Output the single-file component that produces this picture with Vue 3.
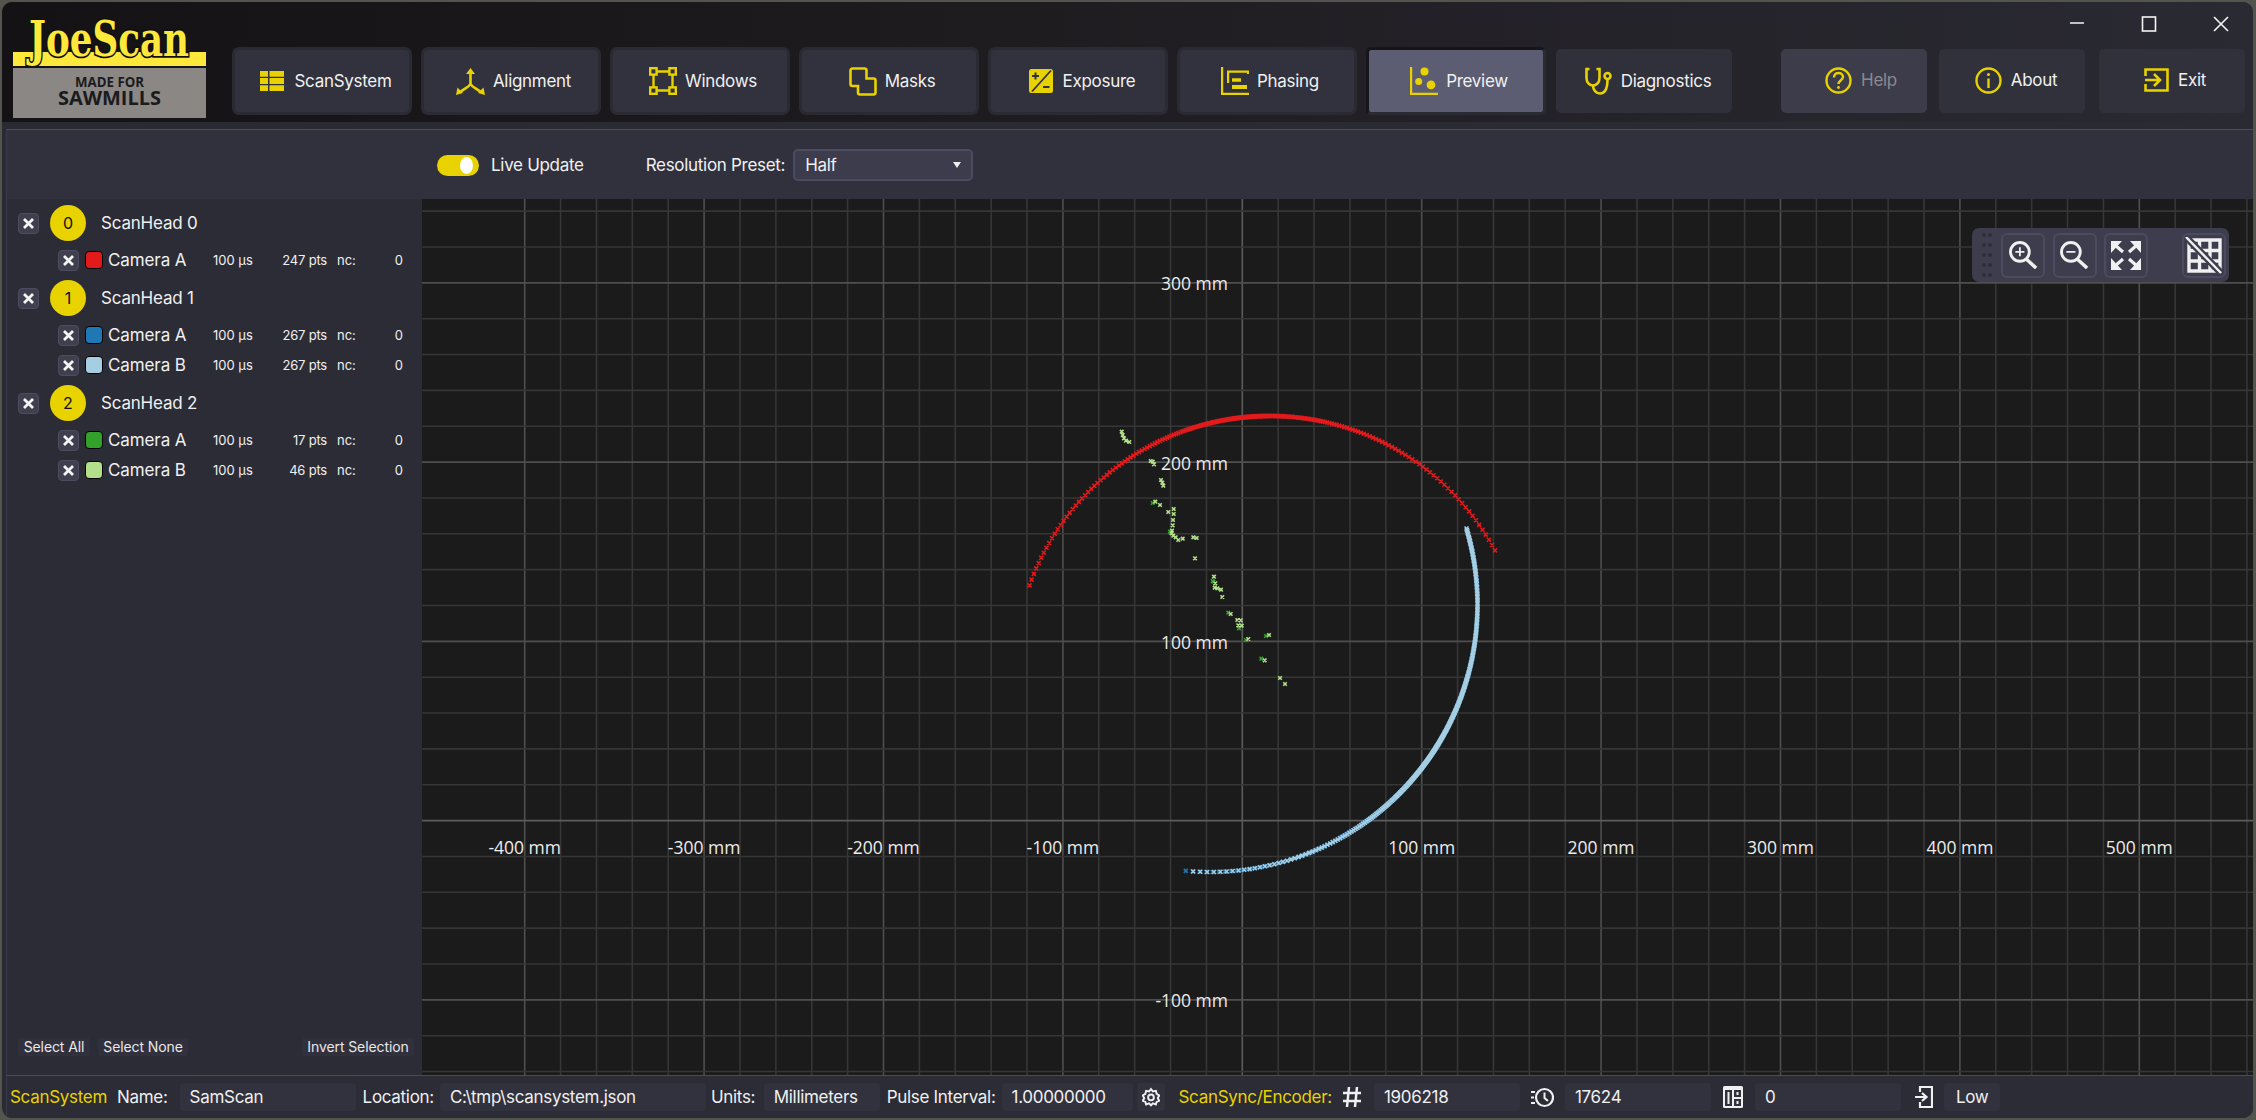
<script setup>
const W = 1831, H = 876, X0 = 422, Y0 = 199
const vLines = []
for (let k = -20; k <= 60; k++) {
  const x = 1242.3 + k * 35.88
  if (x > X0 && x < X0 + W) vLines.push({ x, cls: k === 0 ? 'axis' : k % 5 === 0 ? 'major' : 'minor' })
}
const hLines = []
for (let k = -30; k <= 30; k++) {
  const y = 820.6 + k * 35.85
  if (y > Y0 && y < Y0 + H) hLines.push({ y, cls: k === 0 ? 'axis' : k % 5 === 0 ? 'major' : 'minor' })
}
const xLabels = [-400, -300, -200, -100, 100, 200, 300, 400, 500].map(v => ({ t: v + ' mm', x: 1242.3 + v * 1.794 }))
const yLabels = [300, 200, 100, -100].map(v => ({ t: v + ' mm', y: 820.6 - v * 1.7925 + 7.5 }))

function mark(x, y, s = 2) {
  return `M${(x - s).toFixed(1)} ${(y - s).toFixed(1)}L${(x + s).toFixed(1)} ${(y + s).toFixed(1)}M${(x - s).toFixed(1)} ${(y + s).toFixed(1)}L${(x + s).toFixed(1)} ${(y - s).toFixed(1)}`
}
function arc(cx, cy, r, a0, a1, n, warp) {
  let d = ''
  for (let i = 0; i < n; i++) {
    const t = warp(i / (n - 1))
    const a = a0 + (a1 - a0) * t
    d += mark(cx + r * Math.cos(a), cy + r * Math.sin(a))
  }
  return d
}
const rad = Math.PI / 180
const bothEnds = u => {
  const s = 2 * u - 1
  return (s * 0.2 + 0.8 * s * s * s + 1) / 2
}
const lastEnd = u => 0.75 * u + 0.25 * Math.pow(u, 12)
const redPath = arc(1270, 671.5, 255.5, -160.3 * rad, -28.3 * rad, 247, bothEnds)
const bluePathB = arc(1210, 604.5, 267.5, -16.5 * rad, 93.6 * rad, 267, lastEnd)
const bluePathA = arc(1210, 604.5, 267.5, -14 * rad, 95.2 * rad, 267, lastEnd)

const lg = [[365,95],[368,105],[372,115],[378,122],[388,126],[452,183],[458,185],[462,193],[483,240],[487,248],[490,257],[466,305],[480,315],[505,336],[521,327],[521,342],[519,360],[518,376],[516,392],[515,400],[520,407],[527,412],[535,420],[548,416],[580,412],[590,414],[585,475],[642,530],[646,550],[644,563],[652,565],[663,569],[667,591],[692,642],[712,660],[722,661],[715,676],[725,677],[745,717],[807,705],[794,781],[840,834],[855,852]]
const dg = [[458,309],[510,395],[640,545],[685,638],[717,685],[738,720],[798,708],[784,776],[512,398],[638,543]]
const toPage = p => mark(1000 + p[0] / 3, 400 + p[1] / 3, 1.8)
const lightGreen = lg.map(toPage).join('')
const darkGreen = dg.map(toPage).join('')

const tools = [
  { name: 'ScanSystem', icon: 'table' },
  { name: 'Alignment', icon: 'align' },
  { name: 'Windows', icon: 'windows' },
  { name: 'Masks', icon: 'masks' },
  { name: 'Exposure', icon: 'exposure' },
  { name: 'Phasing', icon: 'phasing' },
  { name: 'Preview', icon: 'preview', active: true },
  { name: 'Diagnostics', icon: 'diag' }
]
const heads = [
  { n: 0, cams: [{ name: 'Camera A', color: '#e31a1c', pts: 247 }] },
  { n: 1, cams: [{ name: 'Camera A', color: '#1f78b4', pts: 267 }, { name: 'Camera B', color: '#a6cee3', pts: 267 }] },
  { n: 2, cams: [{ name: 'Camera A', color: '#33a02c', pts: 17 }, { name: 'Camera B', color: '#b2df8a', pts: 46 }] }
]
</script>

<template>
  <div class="desk">
    <div class="window">
      <header class="header">
        <svg class="logo" viewBox="0 0 193 98" width="193" height="98">
          <rect x="0" y="31" width="193" height="14" fill="#fde83b" />
          <rect x="0" y="47" width="193" height="50" fill="#8a8785" />
          <text x="16" y="35" textLength="160" lengthAdjust="spacingAndGlyphs" class="logo-main">JoeScan</text>
          <text x="96.500" y="66" textLength="69" lengthAdjust="spacingAndGlyphs" text-anchor="middle" class="logo-sub1">MADE FOR</text>
          <text x="96.500" y="84" textLength="103" lengthAdjust="spacingAndGlyphs" text-anchor="middle" class="logo-sub2">SAWMILLS</text>
        </svg>
        <div class="head-right">
          <div class="winctl">
            <svg width="16" height="16" viewBox="0 0 16 16"><path d="M1 7H15" /></svg>
            <svg width="16" height="16" viewBox="0 0 16 16"><rect x="1.500" y="1" width="13" height="14" /></svg>
            <svg width="16" height="16" viewBox="0 0 16 16"><path d="M1 1L15 15M15 1L1 15" /></svg>
          </div>
          <div class="toolrow">
            <div class="tools">
              <button v-for="t in tools" :key="t.name" class="tool" :class="{ active: t.active, wide: t.icon === 'diag' }">
                <span class="ico">
                  <svg v-if="t.icon === 'table'" width="24" height="20" viewBox="0 0 24 20" fill="#e8d200"><path d="M0 0h8v5.800H0zM9.500 0H24v5.800H9.500zM0 7.100h8v5.800H0zM9.500 7.100H24v5.800H9.500zM0 14.200h8V20H0zM9.500 14.200H24V20H9.500z" /></svg>
                  <svg v-else-if="t.icon === 'align'" width="29" height="27" viewBox="0 0 29 27" fill="none" stroke="#e8d200" stroke-width="2.600"><path d="M14.500 4V16M14.500 16C13 19 9 20 4 24M14.500 16C16 19 20 20 25 24" /><path d="M14.500 0L19 6H10Z M0 27L1.500 19.500L7 25Z M29 27L27.500 19.500L22 25Z" fill="#e8d200" stroke="none" /></svg>
                  <svg v-else-if="t.icon === 'windows'" width="28" height="28" viewBox="0 0 28 28" fill="none" stroke="#e8d200" stroke-width="2.400"><path d="M8 4.500H20M8 23.500H20M4.500 8V20M23.500 8V20" /><rect x="1.200" y="1.200" width="6.400" height="6.400" /><rect x="20.400" y="1.200" width="6.400" height="6.400" /><rect x="1.200" y="20.400" width="6.400" height="6.400" /><rect x="20.400" y="20.400" width="6.400" height="6.400" /></svg>
                  <svg v-else-if="t.icon === 'masks'" width="28" height="29" viewBox="0 0 28 29" fill="none" stroke="#e8d200" stroke-width="2.600"><path d="M3.500 1.500H15.500a2 2 0 0 1 2 2V11.500H24.500a2 2 0 0 1 2 2V25.500a2 2 0 0 1-2 2H11a2 2 0 0 1-2-2V19H3.500a2 2 0 0 1-2-2V3.500a2 2 0 0 1 2-2Z" /></svg>
                  <svg v-else-if="t.icon === 'exposure'" width="24" height="24" viewBox="0 0 24 24"><rect width="24" height="24" rx="2.500" fill="#e8d200" /><path d="M3 22.500L22 1.500" stroke="#32323e" stroke-width="1.800" /><path d="M6.500 3.500V10.500M3 7H10M14 18H20.500" stroke="#32323e" stroke-width="2" /></svg>
                  <svg v-else-if="t.icon === 'phasing'" width="28" height="28" viewBox="0 0 28 28" fill="#e8d200"><path d="M0 0H2.200V25.800H28V28H0Z" /><path d="M6 3.500H28V7H26V5.700H8.200V16H6Z" /><path d="M11 11.300H20V14.700H11ZM11 18H26V22H11Z" /></svg>
                  <svg v-else-if="t.icon === 'preview'" width="28" height="28" viewBox="0 0 28 28" fill="#e8d200"><path d="M0 0H2.200V25.800H28V28H0Z" /><circle cx="14.500" cy="4.500" r="4" /><circle cx="8.700" cy="14.500" r="3.500" /><circle cx="21" cy="17.800" r="4.400" /></svg>
                  <svg v-else-if="t.icon === 'diag'" width="28" height="28" viewBox="0 0 28 28" fill="none" stroke="#e8d200" stroke-width="2.600"><path d="M4.500 2H1.500V11C1.500 16 5 18.500 8 18.500C11 18.500 14.500 16 14.500 11V2H11.500" /><path d="M8 18.500C8 23 11 26.500 15 26.500C20 26.500 22.500 22 22.500 12" /><circle cx="22.500" cy="9" r="3" /></svg>
                </span>
                <span class="tool-label">{{ t.name }}</span>
              </button>
            </div>
            <div class="sys">
              <button class="sysbtn help">
                <svg width="27" height="27" viewBox="0 0 27 27" fill="none" stroke="#e8d200" stroke-width="2.400"><circle cx="13.500" cy="13.500" r="12" /><path d="M9 10.500C9 7.500 11 6 13.500 6C16 6 18 7.500 18 10C18 13 13.500 13.500 13.500 17" /><circle cx="13.500" cy="20.500" r="1.400" fill="#e8d200" stroke="none" /></svg>
                <span>Help</span>
              </button>
              <button class="sysbtn about">
                <svg width="27" height="27" viewBox="0 0 27 27" fill="none" stroke="#e8d200" stroke-width="2.400"><circle cx="13.500" cy="13.500" r="12" /><path d="M13.500 11.500V21" /><circle cx="13.500" cy="7.500" r="1.500" fill="#e8d200" stroke="none" /></svg>
                <span>About</span>
              </button>
              <button class="sysbtn exit-btn">
                <svg width="25" height="24" viewBox="0 0 25 24" fill="none" stroke="#e8d200" stroke-width="2.600"><path d="M1.500 8V1.500H23.500V22.500H1.500V16" /><path d="M1 12H15M10 6L16 12L10 18" /></svg>
                <span>Exit</span>
              </button>
            </div>
          </div>
        </div>
      </header>

      <div class="panel">
        <div class="topbar">
          <div class="toggle"><span class="knob"></span></div>
          <span class="lbl live">Live Update</span>
          <span class="lbl res">Resolution Preset:</span>
          <div class="select"><span>Half</span><i class="caret"></i></div>
        </div>
        <div class="main">
          <aside class="side">
            <div class="list">
              <div v-for="h in heads" :key="h.n" class="group">
                <div class="head-row">
                  <span class="check"><svg width="13" height="13" viewBox="0 0 13 13"><path d="M2 2L11 11M11 2L2 11" /></svg></span>
                  <span class="badge">{{ h.n }}</span>
                  <span class="head-name">ScanHead {{ h.n }}</span>
                </div>
                <div v-for="c in h.cams" :key="c.name" class="cam-row">
                  <span class="check"><svg width="13" height="13" viewBox="0 0 13 13"><path d="M2 2L11 11M11 2L2 11" /></svg></span>
                  <span class="swatch" :style="{ background: c.color }"></span>
                  <span class="cam-name">{{ c.name }}</span>
                  <span class="us">100 µs</span>
                  <span class="pts">{{ c.pts }} pts</span>
                  <span class="nc">nc:</span>
                  <span class="zero">0</span>
                </div>
              </div>
            </div>
            <div class="sel">
              <button class="selbtn">Select All</button>
              <button class="selbtn none">Select None</button>
              <button class="selbtn inv">Invert Selection</button>
            </div>
          </aside>
          <section class="chart">
            <svg class="plot" :viewBox="`${X0} ${Y0} ${W} ${H}`">
              <line v-for="l in vLines" :key="'v' + l.x" :x1="l.x" :x2="l.x" :y1="Y0" :y2="Y0 + H" :class="l.cls" />
              <line v-for="l in hLines" :key="'h' + l.y" :x1="X0" :x2="X0 + W" :y1="l.y" :y2="l.y" :class="l.cls" />
              <text v-for="l in xLabels" :key="l.t" :x="l.x" y="854" text-anchor="middle" class="axl">{{ l.t }}</text>
              <text v-for="l in yLabels" :key="l.t" x="1228" :y="l.y" text-anchor="end" class="axl">{{ l.t }}</text>
              <path :d="redPath" stroke="#e31a1c" stroke-width="1.600" fill="none" />
              <path :d="bluePathA" stroke="#1f78b4" stroke-width="1.600" fill="none" />
              <path :d="bluePathB" stroke="#a6cee3" stroke-width="1.600" fill="none" />
              <path :d="darkGreen" stroke="#33a02c" stroke-width="1.600" fill="none" />
              <path :d="lightGreen" stroke="#b2df8a" stroke-width="1.600" fill="none" />
            </svg>
            <div class="plot-tools">
              <div class="grip"><i v-for="n in 10" :key="n"></i></div>
              <button class="pt">
                <svg width="29" height="28" viewBox="0 0 32 31" fill="none" stroke="#f0f0f0" stroke-width="3.200"><circle cx="12" cy="12" r="10.400" /><path d="M19 20L30 30" stroke-width="3.800" /><path d="M12 7V17M7 12H17" stroke-width="2" /></svg>
              </button>
              <button class="pt">
                <svg width="29" height="28" viewBox="0 0 32 31" fill="none" stroke="#f0f0f0" stroke-width="3.200"><circle cx="12" cy="12" r="10.400" /><path d="M19 20L30 30" stroke-width="3.800" /><path d="M7 12H17" stroke-width="2" /></svg>
              </button>
              <button class="pt">
                <svg width="30" height="29" viewBox="0 0 30 29"><g fill="#f0f0f0"><path d="M0 0H11L0 12ZM30 0H19L30 12ZM0 29H11L0 17ZM30 29H19L30 17Z" /></g><path d="M4 4L12 11M26 4L18 11M4 25L12 18M26 25L18 18" stroke="#f0f0f0" stroke-width="3.200" fill="none" /></svg>
              </button>
              <span class="pt-gap"></span>
              <button class="pt">
                <svg width="38" height="37" viewBox="0 0 38 37" fill="none"><path d="M4 3H35V34H4Z M4 13.500H35 M4 24H35 M14.500 3V34 M25 3V34" stroke="#f0f0f0" stroke-width="3.400" /><path d="M1 0L36 36" stroke="#3d3d4d" stroke-width="7" /><path d="M1 0L36 36" stroke="#f0f0f0" stroke-width="2.400" /></svg>
              </button>
            </div>
          </section>
        </div>
        <footer class="status">
          <span class="yl s1">ScanSystem</span>
          <span class="s2">Name:</span>
          <span class="field f-name">SamScan</span>
          <span class="s3">Location:</span>
          <span class="field f-loc">C:\tmp\scansystem.json</span>
          <span class="s3b">Units:</span>
          <span class="field f-units">Millimeters</span>
          <span class="s4">Pulse Interval:</span>
          <span class="field f-pulse">1.00000000</span>
          <button class="gear">
            <svg width="18" height="22" viewBox="0 0 24 24" fill="none" stroke="#f0f0f0" stroke-width="2.600"><path d="M12 1.500L14.500 4.500L18.500 3.800L19.500 7.800L23 10L21 13.500L23 17L19.500 18.500L18.500 22L14.500 20.500L12 23L9.500 20.500L5.500 22L4.500 18.500L1 17L3 13.500L1 10L4.500 7.800L5.500 3.800L9.500 4.500Z" /><circle cx="12" cy="12.500" r="3.800" /></svg>
          </button>
          <span class="yl s5">ScanSync/Encoder:</span>
          <svg class="st-ico hash" width="20" height="22" viewBox="0 0 20 22" fill="none" stroke="#f0f0f0" stroke-width="2.500"><path d="M7 1L5 21M15 1L13 21M1 7H19M1 15H19" /></svg>
          <span class="field f-num">1906218</span>
          <svg class="st-ico clock" width="23" height="23" viewBox="0 0 23 23" fill="none" stroke="#f0f0f0" stroke-width="2.200"><circle cx="13.500" cy="11.500" r="8.500" /><path d="M13.500 6.500V12L17 15" stroke-width="2" /><path d="M0 6H4M0 11.500H3M0 17H4" /></svg>
          <span class="field f-num f2">17624</span>
          <svg class="st-ico calc" width="20" height="24" viewBox="0 0 20 24"><rect x="0" y="1" width="20" height="22" rx="1.500" fill="#f0f0f0" /><rect x="2" y="5" width="7" height="16" fill="#32323e" /><rect x="11" y="5" width="7" height="7" fill="#32323e" /><rect x="11" y="14" width="7" height="7" fill="#32323e" /><path d="M5.500 7V19M14.500 7V10M14.500 16V19" stroke="#f0f0f0" stroke-width="2" /></svg>
          <span class="field f-num f3">0</span>
          <svg class="st-ico exit" width="18" height="24" viewBox="0 0 18 24" fill="none" stroke="#f0f0f0" stroke-width="2.200"><path d="M5 7V2H17V22H5V17" /><path d="M0 12H11M7 8L11.500 12L7 16" /></svg>
          <span class="field f-low">Low</span>
        </footer>
      </div>
    </div>
  </div>
</template>

<style>
html, body { margin: 0; background: #54544f; }
</style>

<style scoped>
.desk { width: 2256px; height: 1120px; box-sizing: border-box; padding: 2px 3px 2px 2px; font-family: Inter, "Noto Sans", sans-serif; color: #f0f0f0; overflow: hidden; }
.window { height: 100%; display: flex; flex-direction: column; border-radius: 10px; overflow: hidden; background: #2a2a33; }
button { font-family: inherit; color: inherit; border: none; padding: 0; cursor: default; }

.header { height: 120px; flex: none; display: flex; background: linear-gradient(90deg, #141214 0%, #1f1c20 45%, #2a2a33 100%); }
.logo { flex: none; margin: 19px 0 0 11px; overflow: visible; }
.logo-main { font-family: "DejaVu Serif", serif; font-weight: 700; font-size: 48px; fill: #fde83b; stroke: #111; stroke-width: 3.500px; paint-order: stroke; }
.logo-sub1 { font-family: "Open Sans", sans-serif; font-weight: 700; font-size: 14px; fill: #1b1b1d; }
.logo-sub2 { font-family: "Open Sans", sans-serif; font-weight: 700; font-size: 20px; fill: #1b1b1d; }

.head-right { flex: 1; display: flex; flex-direction: column; margin-left: 26px; }
.winctl { height: 45px; display: flex; justify-content: flex-end; align-items: flex-start; gap: 56px; padding: 14px 24px 0 0; box-sizing: border-box; }
.winctl svg { fill: none; stroke: #f4f4f4; stroke-width: 1.600; }
.toolrow { display: flex; }
.tools { display: flex; gap: 9px; }
.tool { width: 180px; height: 68px; box-sizing: border-box; background: #32323e; border: 3px solid #2a2a33; border-radius: 7px; display: flex; align-items: center; justify-content: center; padding-left: 4px; gap: 6px; font-size: 17px; letter-spacing: -0.3px; color: #f0f0f0; }
.tool.active { background: #5c5d72; border-color: #16151a #2a2a33 #2a2a33 #16151a; border-radius: 5px; }
.tool.wide { width: 176px; height: 64px; margin: 2px 0 0 1px; border: none; border-radius: 5px; background: #30303b; padding-left: 6px; }
.ico { width: 32px; display: flex; justify-content: center; }
.sys { display: flex; margin-left: 49px; padding-top: 2px; }
.sysbtn { width: 146px; height: 64px; background: #31313c; border-radius: 5px; display: flex; align-items: center; justify-content: center; gap: 9px; font-size: 17px; letter-spacing: -0.3px; padding-bottom: 2px; }
.sysbtn.help { background: #3c3c4a; color: #8a8a90; padding-left: 14px; }
.sysbtn.about { margin-left: 12px; padding-left: 8px; }
.sysbtn.exit-btn { margin-left: 14px; padding-left: 6px; }

.panel { flex: 1; min-height: 0; margin: 7px 0 0 4px; display: flex; flex-direction: column; border-top: 1px solid #4a4a62; border-left: 1px solid #3a3a4c; background: #31313e; }
.topbar { height: 69px; box-sizing: border-box; flex: none; display: flex; align-items: center; background: #31313e; padding: 1px 0 0 430px; }
.toggle { width: 42px; height: 21px; border-radius: 11px; background: #e8d200; display: flex; align-items: center; justify-content: flex-end; padding-right: 6px; box-sizing: border-box; }
.knob { width: 13px; height: 17px; border-radius: 50%; background: #fff; }
.lbl { font-size: 17px; letter-spacing: -0.3px; }
.live { margin-left: 12px; }
.res { margin-left: 62px; }
.select { width: 180px; height: 32px; box-sizing: border-box; margin-left: 8px; border: 2px solid #4b4b62; border-radius: 5px; background: #3c3c4c; display: flex; align-items: center; justify-content: space-between; padding: 0 10px; font-size: 17px; letter-spacing: -0.3px; }
.caret { width: 0; height: 0; border-left: 4.500px solid transparent; border-right: 4.500px solid transparent; border-top: 6px solid #eee; }

.main { flex: 1; min-height: 0; display: flex; }
.side { width: 415px; flex: none; background: #2c2c36; display: flex; flex-direction: column; justify-content: space-between; }
.list { padding-top: 6px; }
.group { padding-bottom: 1px; margin-bottom: 4px; }
.head-row { height: 36px; display: flex; align-items: center; margin-bottom: 4px; padding-left: 11px; }
.check { width: 21px; height: 21px; box-sizing: border-box; background: #3f3f4f; border: 1px solid #4c4c5e; border-radius: 4px; display: flex; align-items: center; justify-content: center; flex: none; }
.check svg { fill: none; stroke: #f4f4f4; stroke-width: 2.800; }
.badge { width: 36px; height: 36px; border-radius: 50%; background: #e8d200; color: #111; font-size: 16px; display: flex; align-items: center; justify-content: center; margin-left: 11px; }
.head-name { font-size: 17px; letter-spacing: -0.2px; margin-left: 15px; }
.cam-row { height: 30px; display: flex; align-items: center; padding-left: 51px; }
.swatch { width: 18px; height: 18px; box-sizing: border-box; border: 1px solid #000; border-radius: 4px; margin-left: 6px; flex: none; }
.cam-name { font-size: 17px; letter-spacing: -0.1px; margin-left: 5px; width: 105px; }
.us { font-size: 13px; width: 60px; flex: none; }
.pts { font-size: 13px; letter-spacing: -0.2px; width: 54px; text-align: right; flex: none; }
.nc { font-size: 13px; margin-left: 10px; width: 30px; flex: none; }
.zero { font-size: 13px; width: 36px; text-align: right; flex: none; }
.sel { display: flex; padding: 0 8px 19px 11px; font-size: 14px; }
.selbtn { height: 18px; width: 72px; background: #31313e; border-radius: 3px; font-size: 14px; letter-spacing: -0.1px; line-height: 18px; color: #e8e8e8; }
.selbtn.none { width: 90px; margin-left: 8px; }
.selbtn.inv { width: 112px; margin-left: auto; }

.chart { flex: 1; min-width: 0; position: relative; background: #1b1b1b; }
.plot { display: block; width: 100%; height: 100%; }
.plot line { stroke-width: 1.600; }
.minor { stroke: #363636; }
.major { stroke: #4f4f4f; }
.axis { stroke: #5c5c5c; }
.axl { font-family: "Open Sans", sans-serif; font-size: 17.500px; fill: #ececec; }
.plot-tools { position: absolute; top: 29px; right: 24px; width: 257px; height: 54px; box-sizing: border-box; background: #3d3d4d; border-radius: 7px; display: flex; align-items: center; padding: 0 3px 0 10px; }
.grip { width: 10px; display: grid; grid-template-columns: 4px 4px; gap: 6px 2px; }
.grip i { width: 4px; height: 4px; border-radius: 50%; background: #2e2e3a; }
.pt { width: 44px; height: 45px; box-sizing: border-box; border: 2px solid #4b4b60; border-radius: 6px; background: transparent; display: flex; align-items: center; justify-content: center; margin-left: 7.500px; flex: none; }
.pt:first-of-type { margin-left: 9px; }
.pt-gap { width: 26px; flex: none; }

.status { height: 43px; box-sizing: border-box; flex: none; display: flex; align-items: center; border-top: 1px solid #4a4a62; background: #2c2c36; font-size: 17px; letter-spacing: -0.3px; padding-left: 3px; }
.yl { color: #e8d200; }
.s2 { margin-left: 10px; }
.s3 { margin-left: 7px; }
.s3b { margin-left: 5px; }
.s4 { margin-left: 7px; }
.s5 { margin-left: 14px; }
.field { height: 28px; box-sizing: border-box; background: #32323e; border-radius: 4px; display: flex; align-items: center; padding-left: 10px; flex: none; color: #f0f0f0; }
.f-name { width: 176px; margin-left: 12px; }
.f-loc { width: 266px; margin-left: 6px; }
.f-units { width: 116px; margin-left: 8.500px; }
.f-pulse { width: 131px; margin-left: 6px; }
.gear { width: 28px; height: 28px; background: #32323e; border-radius: 4px; margin-left: 4px; display: flex; align-items: center; justify-content: center; }
.st-ico { flex: none; }
.hash { margin-left: 10px; }
.clock { margin-left: 11px; }
.calc { margin-left: 12px; }
.exit { margin-left: 14px; }
.f-num { width: 146px; margin-left: 12px; }
.f2 { margin-left: 11px; }
.f3 { margin-left: 12px; }
.f-low { width: 56px; margin-left: 11px; padding-left: 12px; }
</style>
